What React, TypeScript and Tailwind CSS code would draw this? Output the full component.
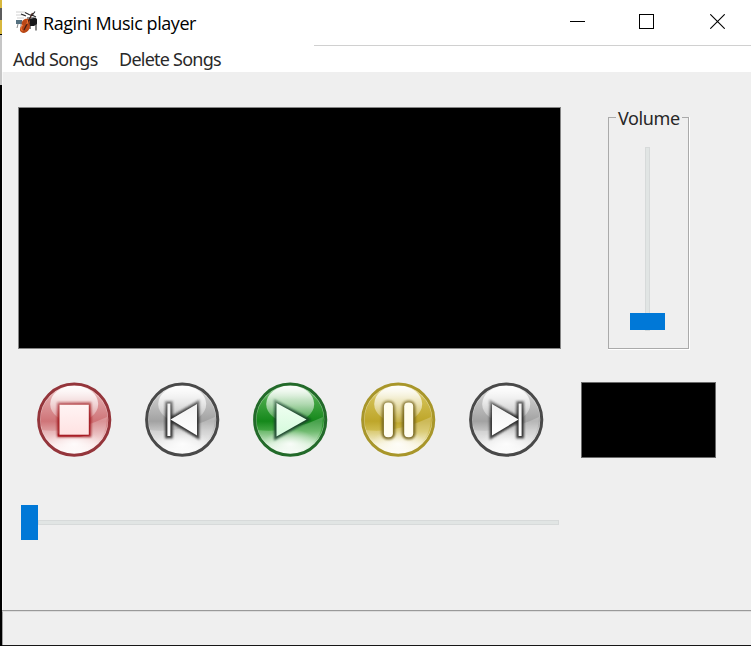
import React from 'react';

type Kind = 'stop' | 'previous' | 'play' | 'pause' | 'next';

interface Palette {
  rim: string;
  body: string;
  mid: string;
  low: string;
  edge: string;
  fill: string;
}

const gray: Palette = { rim: '#484848', body: '#c6c6c6', mid: '#a2a2a2', low: '#e9e9e9', edge: '#2c2c2c', fill: '#f2f2f2' };

const palettes: Record<Kind, Palette> = {
  stop: { rim: '#94343a', body: '#dfa0a2', mid: '#cf7478', low: '#f8dfdf', edge: '#a0181c', fill: '#fff4f4' },
  previous: gray,
  play: { rim: '#246a29', body: '#46a746', mid: '#15881b', low: '#c5e8c5', edge: '#17402a', fill: '#f0fff2' },
  pause: { rim: '#a8962c', body: '#d0bd50', mid: '#bea62a', low: '#f3edc9', edge: '#76651b', fill: '#fffdec' },
  next: gray,
};

const glyphEnds: Record<Kind, string> = {
  stop: '#ffe2e2',
  previous: '#ffffff',
  play: '#d4fadb',
  pause: '#fffdf0',
  next: '#ffffff',
};

const labels: Record<Kind, string> = {
  stop: 'Stop',
  previous: 'Previous',
  play: 'Play',
  pause: 'Pause',
  next: 'Next',
};

function Glyph({ kind }: { kind: Kind }) {
  switch (kind) {
    case 'stop':
      return <rect x="22.5" y="22.7" width="29.3" height="30" />;
    case 'previous':
      return (
        <>
          <rect x="22.4" y="21.5" width="3" height="32.5" />
          <path d="M25.5 37.5 52 22V53.5Z" />
        </>
      );
    case 'play':
      return <path d="M23.5 21 53.5 37.5 23.5 54.5Z" />;
    case 'pause':
      return (
        <>
          <rect x="22.9" y="20.6" width="9" height="34.6" rx="4" />
          <rect x="43.2" y="20.6" width="9" height="34.6" rx="4" />
        </>
      );
    case 'next':
      return (
        <>
          <rect x="49.6" y="21.5" width="3" height="32.5" />
          <path d="M23 22 49.5 37.5 23 53.5Z" />
        </>
      );
  }
}

function MediaButton({ kind }: { kind: Kind }) {
  const c = palettes[kind];
  const id = (name: string) => `${kind}-${name}`;
  const url = (name: string) => `url(#${kind}-${name})`;
  return (
    <button aria-label={labels[kind]} className="block size-[76px]">
      <svg viewBox="0 0 76 76" className="block size-full">
        <defs>
          <linearGradient id={id('body')} x1="0" y1="0" x2="0" y2="1">
            <stop offset="0" stopColor={c.low} />
            <stop offset=".22" stopColor={c.body} />
            <stop offset=".52" stopColor={c.mid} />
            <stop offset=".66" stopColor={c.body} />
            <stop offset=".84" stopColor={c.low} />
            <stop offset="1" stopColor="#ffffff" />
          </linearGradient>
          <linearGradient id={id('shine')} x1="0" y1="0" x2="0" y2="1">
            <stop offset="0" stopColor="#fff" stopOpacity=".97" />
            <stop offset=".5" stopColor="#fff" stopOpacity=".6" />
            <stop offset="1" stopColor="#fff" stopOpacity=".12" />
          </linearGradient>
          <radialGradient id={id('glow')} cx=".5" cy=".5" r=".5">
            <stop offset="0" stopColor="#fff" stopOpacity=".85" />
            <stop offset="1" stopColor="#fff" stopOpacity="0" />
          </radialGradient>
          <filter id={id('soft')} x="-30%" y="-30%" width="160%" height="160%">
            <feGaussianBlur stdDeviation="1.25" />
          </filter>
          <filter id={id('rim')} x="-10%" y="-10%" width="120%" height="120%">
            <feGaussianBlur stdDeviation=".5" />
          </filter>
          <linearGradient id={id('fill')} x1="0" y1="0" x2="0" y2="1">
            <stop offset="0" stopColor={c.fill} />
            <stop offset="1" stopColor={glyphEnds[kind]} />
          </linearGradient>
          <linearGradient id={id('edge')} gradientUnits="userSpaceOnUse" x1="30" y1="18" x2="38" y2="56">
            <stop offset="0" stopColor={c.edge} stopOpacity=".5" />
            <stop offset=".5" stopColor={c.edge} stopOpacity=".9" />
            <stop offset="1" stopColor={c.edge} stopOpacity=".9" />
          </linearGradient>
        </defs>
        <circle cx="37.2" cy="37.7" r="36" fill={url('body')} />
        <path d="M4 48Q34 52 70 35Q70 61 45 70Q14 75 4 48" fill="#fff" opacity=".22" />
        <ellipse cx="37.2" cy="62" rx="27" ry="15" fill={url('glow')} />
        <ellipse cx="37.2" cy="22" rx="24" ry="18.5" fill={url('shine')} />
        <circle cx="37.2" cy="37.7" r="34.2" fill="none" stroke="#fff" strokeOpacity=".4" strokeWidth="1.2" />
        <circle cx="37.2" cy="37.7" r="35.6" fill="none" stroke={c.rim} strokeWidth="3" filter={url('rim')} />
        <g fill={c.edge} stroke={url('edge')} strokeWidth="4.8" filter={url('soft')}>
          <Glyph kind={kind} />
        </g>
        {kind === 'stop' && <path d="M21.5 51.5V53.8H43L51.8 52.7V43" fill="none" stroke="#a81820" strokeWidth="1.3" />}
        <g fill={url('fill')}>
          <Glyph kind={kind} />
        </g>
      </svg>
    </button>
  );
}

function InstrumentsIcon() {
  return (
    <svg viewBox="0 0 24 24" className="size-6">
      <path d="M1 2h9M1 5h9M2 8h7M1 11h8" stroke="#c4c4c4" strokeWidth=".8" />
      <path d="m12 10 8-2.500 2 1.500v5l-3 2h-7z" fill="#171719" />
      <path d="M21 13v7.500M15 14v5" stroke="#222" strokeWidth="1.1" />
      <path d="M6 4l5 2M10 2.500l4 2 3 1 3-4M17 5l4 2M12 8h7" stroke="#29292c" strokeWidth="1.1" fill="none" />
      <path d="M1 10h6v4H1z" fill="#55707f" />
      <path d="m3 14-1 4M6 14v4" stroke="#8a8a8a" />
      <path d="M10 9c3-1 6 1 4.500 4.500 1.500 4-1 9-5.500 9.500-5-.5-5-4.500-2-7.500-1-3 .5-5.500 3-6.500z" fill="#b94716" />
      <path d="M17.500 3 9 20" stroke="#3d1d14" strokeWidth="1.2" />
      <path d="M8 15c-2.500 2-2.500 4-.5 6M12 10c1 1.500 1 3-.5 4" stroke="#ed7637" strokeWidth="1.1" fill="none" />
    </svg>
  );
}

function WindowControls() {
  return (
    <div className="flex items-center pt-[2px]">
      <button aria-label="Minimize" className="mr-[54px]">
        <svg width="15" height="15" shapeRendering="crispEdges"><path d="M0 7.5h15" stroke="#000" /></svg>
      </button>
      <button aria-label="Maximize" className="mr-14">
        <svg width="15" height="15" shapeRendering="crispEdges"><rect x=".5" y=".5" width="14" height="14" fill="none" stroke="#000" /></svg>
      </button>
      <button aria-label="Close" className="mr-[26px]">
        <svg width="15" height="15"><path d="m.3.3 14.4 14.4M14.7.3.3 14.7" stroke="#000" strokeWidth="1.1" /></svg>
      </button>
    </div>
  );
}

export default function App() {
  const buttons: Kind[] = ['stop', 'previous', 'play', 'pause', 'next'];
  return (
    <div className="flex h-[646px] w-[751px] overflow-hidden bg-[#efefef] font-['Noto_Sans',sans-serif] text-black">
      <div className="flex w-[2px] shrink-0 flex-col bg-black">
        <div className="h-2 bg-[#d7b73d]" />
        <div className="h-3 bg-[#5c5c5c]" />
        <div className="h-[14px] bg-[#d7b73d]" />
        <div className="h-px bg-black" />
        <div className="h-[50px] bg-[#c6c6c6]" />
      </div>
      <div className="flex min-w-0 grow flex-col">
        <header className="h-[72px] bg-white">
          <div className="flex h-[45px] items-start justify-between">
            <div className="flex items-start pt-[10px] pl-[13px]">
              <InstrumentsIcon />
              <h1 className="ml-1 whitespace-nowrap font-['Open_Sans',sans-serif] text-[18px] leading-[27px] tracking-[-0.44px]">Ragini Music player</h1>
            </div>
            <div className="pt-[12px]"><WindowControls /></div>
          </div>
          <div className="ml-[312px] h-px bg-[#d0d0d0]" />
          <nav className="flex pl-[11px] text-[18px] leading-[27px] text-[#292929]">
            <button className="w-[106px] text-left whitespace-nowrap tracking-[-0.58px]">Add Songs</button>
            <button className="text-left whitespace-nowrap tracking-[-0.76px]">Delete Songs</button>
          </nav>
        </header>
        <main className="flex h-[538px] flex-col border-l border-[#f8f8f8] pt-[35px] pl-[15px]">
          <div className="flex h-[243px] gap-[47px]">
            <div className="h-[242px] w-[543px] border border-[#858585] bg-black" />
            <fieldset className="relative mt-[10px] h-[233px] w-[82px] border-r border-b border-white">
              <div className="h-[232px] w-[81px] border border-[#aaa]">
                <div className="mt-[29px] ml-9 h-[184px] w-[5px] border border-[#d7dada] bg-[#e1e5e4]" />
                <div className="relative -mt-[18px] ml-[21px] h-[17px] w-[35px] bg-[#0078d7]" />
              </div>
              <legend className="absolute -top-[12px] left-[8px] bg-[#efefef] px-[2px] text-[18px] leading-[27px] tracking-[-0.4px] whitespace-nowrap text-[#272727]">Volume</legend>
            </fieldset>
          </div>
          <div className="mt-8 ml-[19px] flex">
            <div className="flex gap-8">{buttons.map(kind => <MediaButton key={kind} kind={kind} />)}</div>
            <div className="ml-9 h-[76px] w-[135px] border border-[#6b6b6b] bg-black" />
          </div>
          <div className="mt-[47px] ml-[3px] flex h-[35px] w-[538px] items-center">
            <div className="h-[35px] w-[17px] bg-[#0078d7]" />
            <div className="h-[5px] grow border border-[#d7dada] bg-[#e1e5e4]" />
          </div>
        </main>
        <footer className="h-9 border-t border-b border-t-[#999] border-b-[#171717]">
          <div className="h-[34px] border-t border-l border-t-[#ddd] border-l-[#a0a0a0] bg-[#efefef]" />
        </footer>
      </div>
    </div>
  );
}
